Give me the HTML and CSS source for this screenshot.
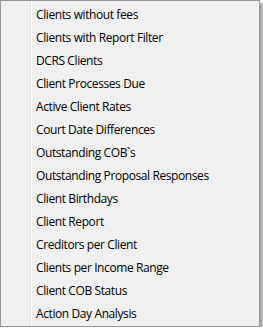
FILE: index.html
```html
<!DOCTYPE html>
<html>
	<head>
		<meta charset="UTF-8">
		<title>Reports menu</title>
		<link rel="stylesheet" href="styles.css">
	</head>
	<body>
		<div class="menu">
			<ul>
				<li>Clients without fees</li>
				<li>Clients with Report Filter</li>
				<li>DCRS Clients</li>
				<li>Client Processes Due</li>
				<li>Active Client Rates</li>
				<li>Court Date Differences</li>
				<li>Outstanding COB`s</li>
				<li>Outstanding Proposal Responses</li>
				<li>Client Birthdays</li>
				<li>Client Report</li>
				<li>Creditors per Client</li>
				<li>Clients per Income Range</li>
				<li>Client COB Status</li>
				<li>Action Day Analysis</li>
			</ul>
		</div>
	</body>
</html>
```
FILE: styles.css
```css
*{
	margin: 0;
	padding: 0;
	list-style: none;
}
body{
	background-color: #fff;
	font-family: "Open Sans", "Noto Sans", sans-serif;
	font-size: 12px;
	letter-spacing: -0.4px;
	color: #000;
}
.menu{
	width: 258px;
	border: 1px solid #979797;
	background-color: #f0f0f0;
	box-shadow: 3px 3px 2px rgba(0,0,0,0.35);
}
.menu ul{
	padding: 2px 0 1px;
	/* gutter line on the left */
	background: linear-gradient(to right, transparent 29px, #e2e3e3 29px, #e2e3e3 30px, #fff 30px, #fff 31px, transparent 31px);
}
.menu li{
	height: 23px;
	line-height: 23px;
	padding-left: 35px;
	white-space: nowrap;
}
```
